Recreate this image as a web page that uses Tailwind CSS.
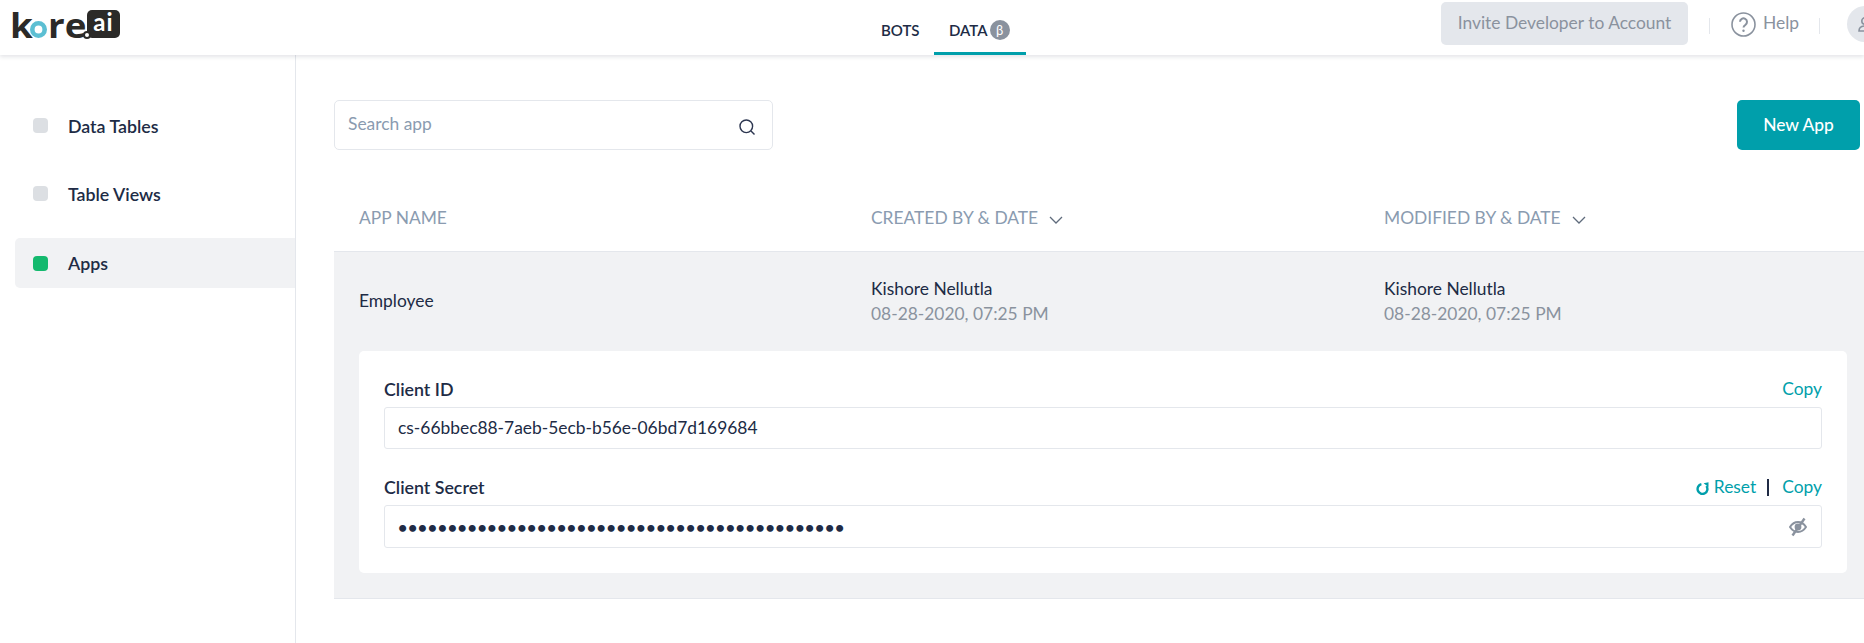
<!DOCTYPE html>
<html lang="en">
<head>
    <meta charset="UTF-8">
    <meta name="viewport" content="width=device-width, initial-scale=1.0">
    <title>Apps</title>
    <script src="https://cdn.jsdelivr.net/npm/@tailwindcss/browser@4"></script>
</head>
<body class="bg-white text-[#202b45] font-['Lato',sans-serif] text-[17.4px] w-[1864px] h-[643px] overflow-hidden">
    <!-- top bar -->
    <header class="relative z-10 h-[55px] flex items-start bg-white shadow-[0_2px_4px_rgba(32,43,69,0.12)]">
        <div class="w-[881px] shrink-0 pl-[10px] pt-[10px] flex items-start h-[38px] text-[#2b2a28]">
            <span class="w-[20px] shrink-0 text-[34px] leading-[28px] mt-[1px] font-bold font-['Open_Sans',sans-serif] origin-left scale-x-[1.08]">k</span>
            <svg class="w-[17px] h-[17px] mt-[11px] shrink-0" viewBox="0 0 17 17" fill="none"><circle cx="8.500" cy="8.500" r="6.200" stroke="#5cbfd3" stroke-width="4.600"/></svg>
            <span class="w-[36px] shrink-0 text-[34px] leading-[28px] mt-[1px] ml-[1px] font-bold font-['Open_Sans',sans-serif] origin-left scale-x-[1.08]">re</span>
            <span class="w-[8px] h-[8px] shrink-0 rounded-full border-2 border-[#2b2a28] mt-[21px] -ml-[1px] relative z-10 bg-white"></span>
            <span class="w-[33px] h-[28px] shrink-0 -ml-[4px] rounded-[5px] bg-[#2b2a28] text-white text-[24px] leading-[23px] font-bold text-center tracking-[1px]">ai</span>
        </div>
        <nav class="w-[145px] shrink-0 h-[55px] flex text-[15px] font-semibold">
            <span class="w-[53px] pt-[20px] leading-[20px] whitespace-nowrap">BOTS</span>
            <span class="w-[92px] h-[55px] border-b-[3px] border-[#009fab] pt-[20px] pl-[15px] flex items-start gap-[2px] leading-[20px]">DATA
                <span class="w-[20px] h-[20px] rounded-full bg-[#8a929e] text-white text-[13px] font-normal text-center leading-[20px]">β</span>
            </span>
        </nav>
        <div class="ml-[415px] flex items-start">
            <span class="mt-[2px] w-[247px] h-[43px] rounded-[5px] bg-[#e4e7ec] text-[#8a929e] flex items-center justify-center whitespace-nowrap">Invite Developer to Account</span>
            <span class="w-px h-[16px] bg-[#e4e7ec] mt-[18px] ml-[21px]"></span>
            <svg class="mt-[12px] ml-[21px] w-[25px] h-[25px] shrink-0" viewBox="0 0 25 25" fill="none" stroke="#8a929e" stroke-width="1.600"><circle cx="12.500" cy="12.500" r="11.500"/><path d="M9 9.800a3.500 3.500 0 1 1 5.400 3c-1.300.8-1.900 1.500-1.900 2.800" stroke-width="2"/><circle cx="12.500" cy="18.800" r="1.200" fill="#8a929e" stroke="none"/></svg>
            <span class="ml-[7px] mt-[12px] w-[36px] leading-[22px] text-[#8a929e]">Help</span>
            <span class="w-px h-[16px] bg-[#e4e7ec] mt-[18px] ml-[20px]"></span>
            <span class="ml-[27px] mt-[6px] w-[36px] h-[36px] shrink-0 rounded-full bg-[#e4e7ec] overflow-hidden flex justify-start pl-[10px] pt-[10px]">
                <svg class="w-[16px] h-[16px] shrink-0" viewBox="0 0 16 16" fill="none" stroke="#8a929e" stroke-width="1.600"><circle cx="8" cy="5" r="3.200"/><path d="M2 15c0-3.600 2.600-5 6-5s6 1.400 6 5z"/></svg>
            </span>
        </div>
    </header>

    <div class="flex h-[588px]">
        <!-- left nav -->
        <aside class="w-[296px] shrink-0 border-r border-[#e4e7ec] pl-[15px] pt-[45px] font-semibold text-[17.8px]">
            <div class="h-[50px] flex items-center pl-[18px] gap-[20px]">
                <span class="w-[15px] h-[15px] rounded-[4px] bg-[#dcdfe3]"></span>
                <span class="mt-[2px]">Data Tables</span>
            </div>
            <div class="h-[50px] mt-[18px] flex items-center pl-[18px] gap-[20px]">
                <span class="w-[15px] h-[15px] rounded-[4px] bg-[#dcdfe3]"></span>
                <span class="mt-[2px]">Table Views</span>
            </div>
            <div class="h-[50px] mt-[20px] flex items-center pl-[18px] gap-[20px] bg-[#f1f2f4] rounded-l-[5px]">
                <span class="w-[15px] h-[15px] rounded-[4px] bg-[#14b96e]"></span>Apps
            </div>
        </aside>

        <!-- main -->
        <main class="flex-1 pl-[38px] pr-[4px] pt-[45px]">
            <div class="flex justify-between">
                <div class="w-[439px] h-[50px] pb-[2px] rounded-[5px] border border-[#e4e7ec] flex items-center justify-between pl-[13px] pr-[16px] text-[#8a9bb0]">
                    Search app
                    <svg class="w-[18px] h-[18px] mt-[5px]" viewBox="0 0 18 18" fill="none" stroke="#2c3650" stroke-width="1.400"><circle cx="8.300" cy="8.300" r="6.300"/><path d="M13 13l3.500 3.500"/></svg>
                </div>
                <button class="w-[123px] h-[50px] rounded-[5px] bg-[#009fab] text-white font-medium">New App</button>
            </div>

            <!-- table head -->
            <div class="-mr-[4px] h-[102px] border-b border-[#e4e7ec] flex items-end pb-[21px] text-[#8a9bb0] pl-[25px]">
                <span class="w-[512px] leading-[24px]">APP NAME</span>
                <span class="w-[513px] leading-[24px] flex items-center gap-[11px]">CREATED BY &amp; DATE
                    <svg class="w-[14px] h-[8px] mt-[4px]" viewBox="0 0 14 8" fill="none" stroke="#5f6b7c" stroke-width="1.300"><path d="M1 1l6 6 6-6"/></svg>
                </span>
                <span class="leading-[24px] flex items-center gap-[11px]">MODIFIED BY &amp; DATE
                    <svg class="w-[14px] h-[8px] mt-[4px]" viewBox="0 0 14 8" fill="none" stroke="#5f6b7c" stroke-width="1.300"><path d="M1 1l6 6 6-6"/></svg>
                </span>
            </div>

            <!-- expanded row -->
            <div class="-mr-[4px] h-[347px] bg-[#f1f2f4] border-b border-[#e4e7ec] pl-[25px] pr-[17px]">
                <div class="h-[99px] pb-[2px] flex items-center">
                    <span class="w-[512px] mt-[2px]">Employee</span>
                    <div class="w-[513px] leading-[25px]">
                        <div>Kishore Nellutla</div>
                        <div class="text-[#8a929e]">08-28-2020, 07:25 PM</div>
                    </div>
                    <div class="leading-[25px]">
                        <div>Kishore Nellutla</div>
                        <div class="text-[#8a929e]">08-28-2020, 07:25 PM</div>
                    </div>
                </div>
                <div class="h-[222px] bg-white rounded-[5px] px-[25px] pt-[25px]">
                    <div class="h-[24px] pt-[2px] flex items-center justify-between">
                        <span class="font-semibold text-[17.8px]">Client ID</span>
                        <span class="text-[#009fab]">Copy</span>
                    </div>
                    <div class="mt-[7px] h-[42px] rounded-[3px] border border-[#e4e7ec] flex items-center pl-[13px]">cs-66bbec88-7aeb-5ecb-b56e-06bd7d169684</div>
                    <div class="mt-[25px] h-[24px] pt-[2px] flex items-center justify-between">
                        <span class="font-semibold text-[17.8px]">Client Secret</span>
                        <span class="flex items-center text-[#009fab]">
                            <svg class="w-[13px] h-[13px] mr-[5px] mt-[2px]" viewBox="0 0 13 13" fill="none" stroke="#009fab" stroke-width="2.400"><path d="M5.400 2.200a4.900 4.900 0 1 0 5 1.800"/><path d="M7.600 1.200l4.900-1v4.900z" fill="#009fab" stroke="none"/></svg>
                            Reset
                            <span class="w-[2px] h-[17px] bg-[#202b45] ml-[11px] mr-[13px]"></span>
                            Copy
                        </span>
                    </div>
                    <div class="mt-[7px] h-[43px] rounded-[3px] border border-[#e4e7ec] flex items-center justify-between pl-[13px] pr-[14px]">
                        <span class="text-[16px] tracking-[0.65px] font-bold leading-[16px]">•••••••••••••••••••••••••••••••••••••••••••••</span>
                        <svg class="w-[18px] h-[20px]" viewBox="0 0 18 20" fill="none" stroke="#8a929e" stroke-width="2"><path d="M1 10c2.200-3.400 5-5 8-5s5.800 1.600 8 5c-2.200 3.400-5 5-8 5s-5.800-1.600-8-5z"/><circle cx="9" cy="10" r="2.400" fill="#8a929e"/><path d="M15.500 1.500L3.500 18.500" stroke-width="2.400"/></svg>
                    </div>
                </div>
            </div>
        </main>
    </div>
</body>
</html>
